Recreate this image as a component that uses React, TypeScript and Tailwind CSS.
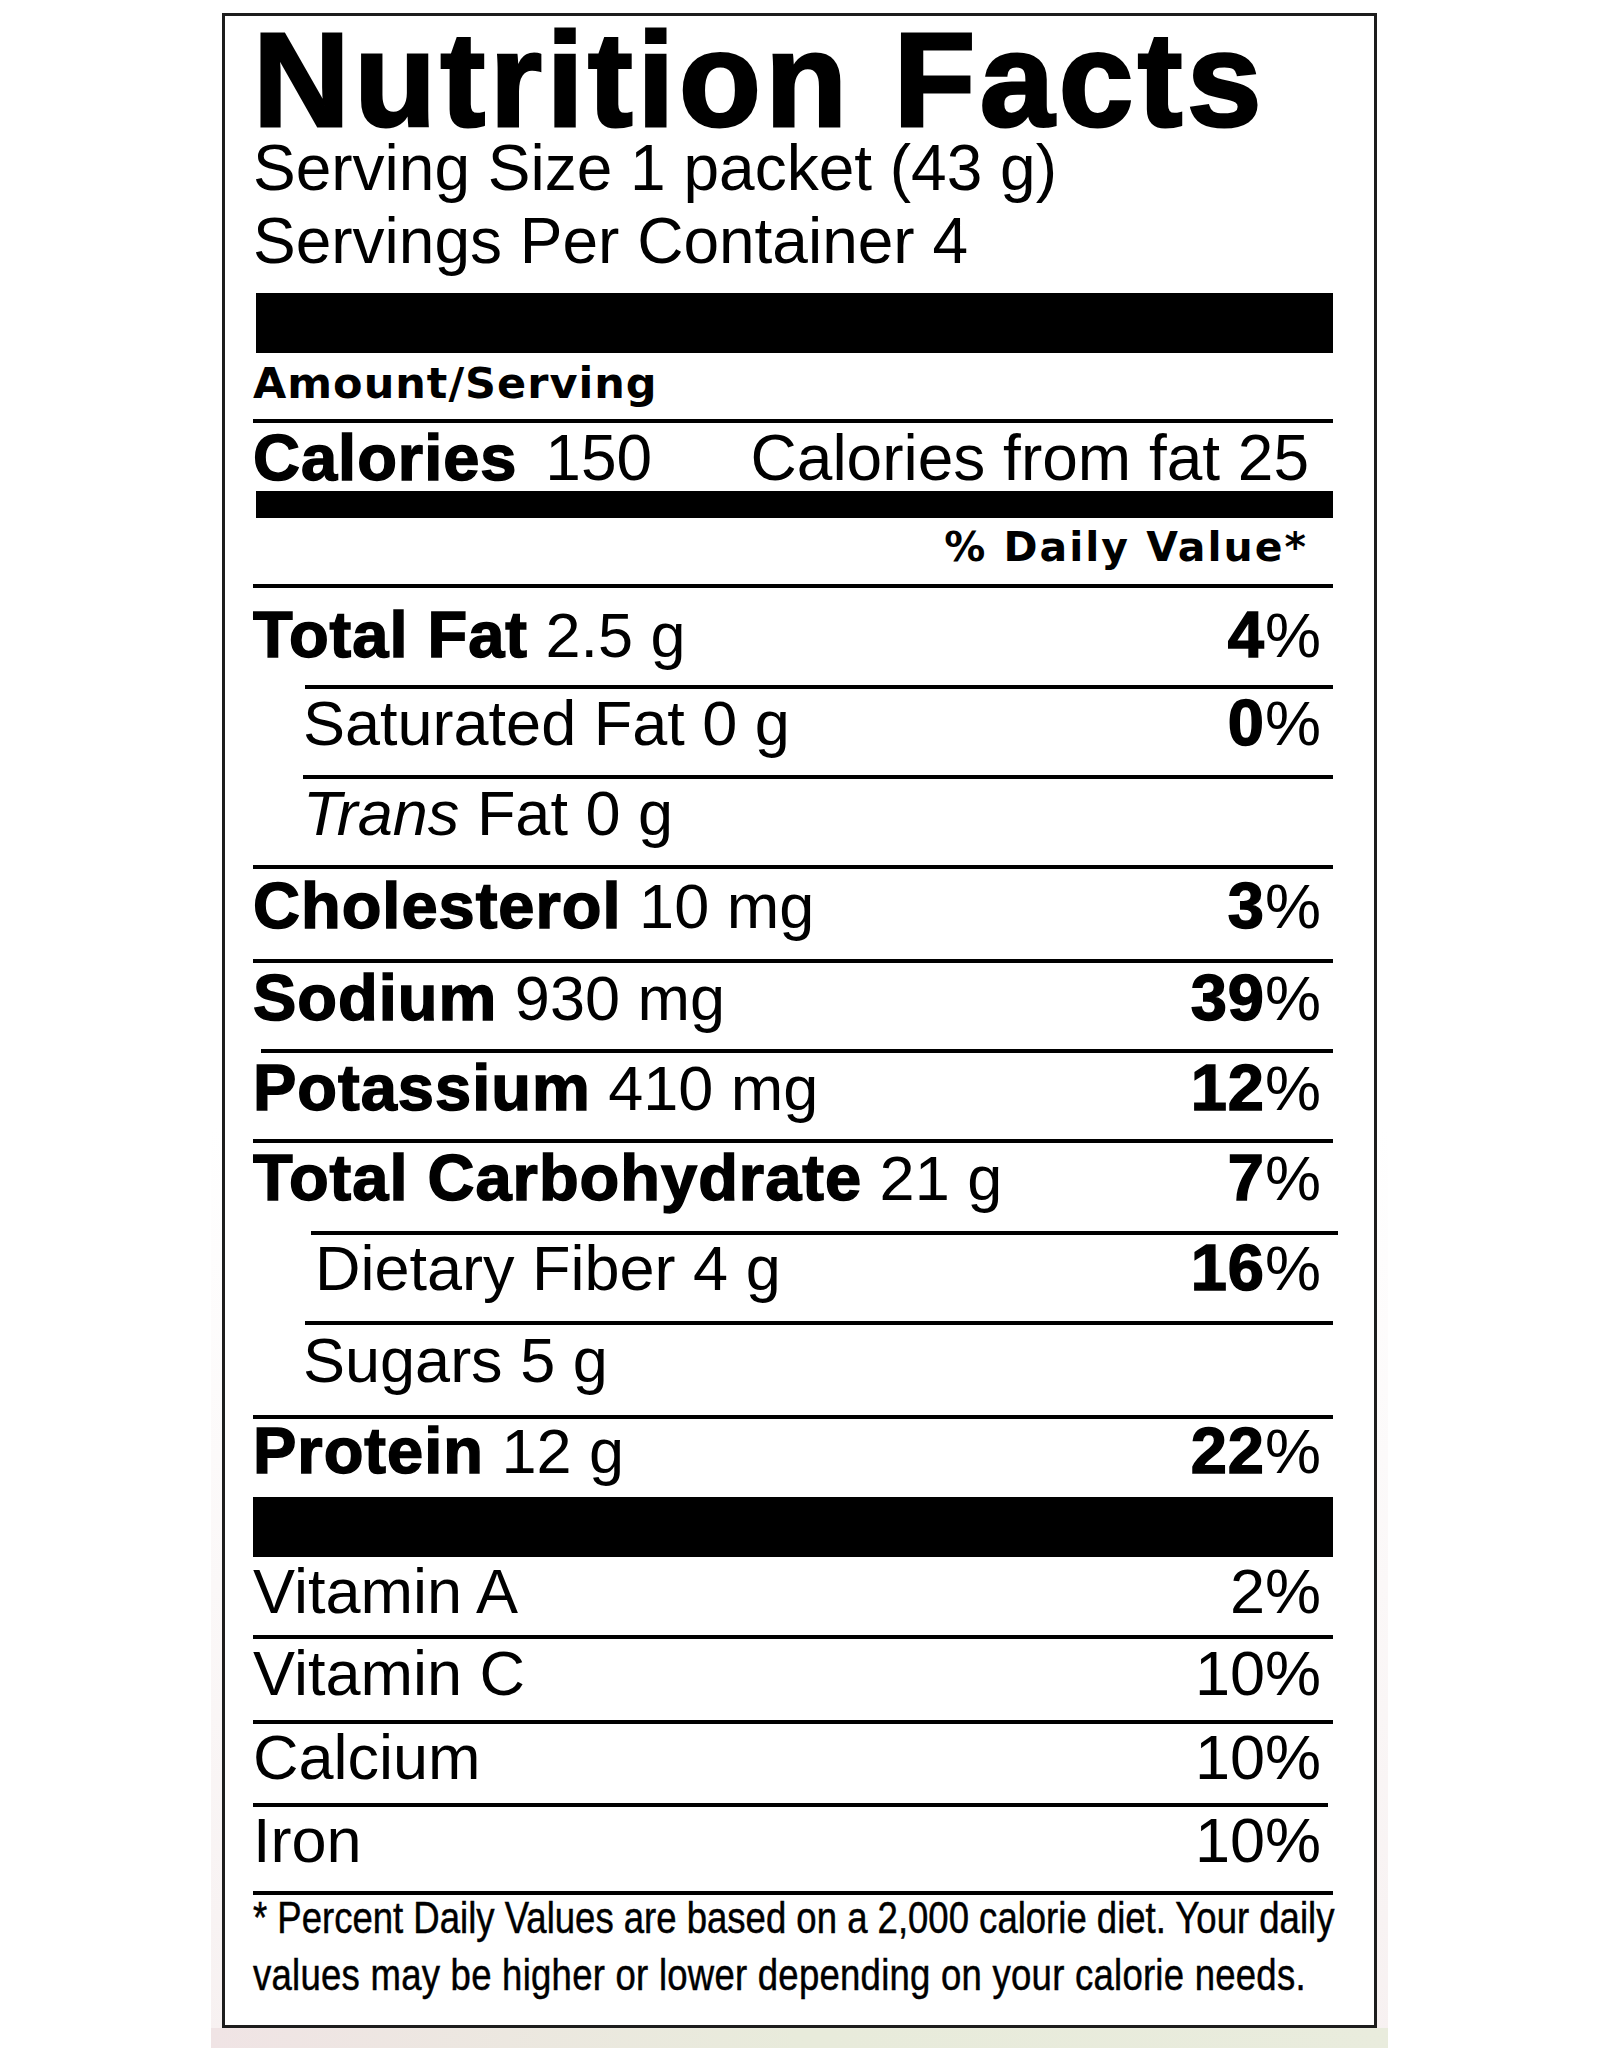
import React from 'react';

type Row = {
  label: string;
  amount: string;
  dv?: string;
  bold?: boolean;
  italic?: string;
  row: string;
  line: string;
};

const BOLD = 'font-bold text-[65px] tracking-[1px] [-webkit-text-stroke:1.5px_black]';

const nutrients: Row[] = [
  { label: 'Total Fat', amount: '2.5 g', dv: '4', bold: true, row: 'h-[97px] pt-[15px]', line: 'ml-[52px]' },
  { label: 'Saturated Fat', amount: '0 g', dv: '0', row: 'h-[86px] pt-[2px] pl-[50px]', line: 'ml-[50px]' },
  { label: 'Fat', italic: 'Trans', amount: '0 g', row: 'h-[86px] pt-[2px] pl-[50px]', line: '' },
  { label: 'Cholesterol', amount: '10 mg', dv: '3', bold: true, row: 'h-[90px] pt-[5px]', line: '' },
  { label: 'Sodium', amount: '930 mg', dv: '39', bold: true, row: 'h-[86px] pt-[3px]', line: 'ml-[8px]' },
  { label: 'Potassium', amount: '410 mg', dv: '12', bold: true, row: 'h-[86px] pt-[3px]', line: '' },
  { label: 'Total Carbohydrate', amount: '21 g', dv: '7', bold: true, row: 'h-[88px] pt-[3px]', line: 'ml-[58px] -mr-[5px]' },
  { label: 'Dietary Fiber', amount: '4 g', dv: '16', row: 'h-[86px] pt-[1px] pl-[62px]', line: 'ml-[52px]' },
  { label: 'Sugars', amount: '5 g', row: 'h-[90px] pt-[3px] pl-[50px]', line: '' },
];

const vitamins = [
  { label: 'Vitamin A', dv: '2%', row: 'h-[78px] pt-[2px]', line: '' },
  { label: 'Vitamin C', dv: '10%', row: 'h-[81px] pt-[2px]', line: '' },
  { label: 'Calcium', dv: '10%', row: 'h-[79px] pt-[1px]', line: 'mr-[5px]' },
  { label: 'Iron', dv: '10%', row: 'h-[84px] pt-[1px]', line: '' },
];

const Line = ({ className = '' }: { className?: string }) => (
  <div className={`h-[4px] bg-black ${className}`} />
);

const NutrientRow = ({ n }: { n: Row }) => (
  <div className={`flex justify-between pr-[12px] text-[63px] leading-[64px] ${n.row}`}>
    <div className="whitespace-nowrap">
      {n.italic && <span className="italic">{n.italic} </span>}
      <span className={n.bold ? BOLD : ''}>{n.label}</span> {n.amount}
    </div>
    {n.dv && (
      <div className="whitespace-nowrap">
        <span className={BOLD}>{n.dv}</span>%
      </div>
    )}
  </div>
);

export default function App() {
  return (
    <div className="w-[1600px] h-[2048px] bg-white text-black font-['Liberation_Sans',Arial,sans-serif]">
      <div className="ml-[211px] w-[1177px] h-[2048px] pt-[13px] bg-linear-to-b from-white from-55% to-[#f7f1f1]">
        <div className="ml-[11px] w-[1155px] h-[2015px] border-[3px] border-[#1d1d1d] bg-white pl-[28px] pt-[4px]">
          <div className="w-[1080px]">
            <div className="mt-[4px] h-[112px] text-[134px] leading-[112px] font-bold tracking-[4.5px] whitespace-nowrap [-webkit-text-stroke:3px_black]">
              Nutrition Facts
            </div>
            <div className="text-[64px] leading-[64px] whitespace-nowrap">Serving Size 1 packet (43 g)</div>
            <div className="text-[64px] leading-[82px] whitespace-nowrap">Servings Per Container 4</div>

            <div className="mt-[11px] ml-[3px] h-[60px] bg-black" />

            <div className="h-[66px] pt-[9px]">
              <span className="font-['DejaVu_Sans',sans-serif] font-bold text-[43px] leading-[43px] tracking-[1px]">
                Amount/Serving
              </span>
            </div>
            <Line />

            <div className="h-[68px] pt-[3px] pr-[24px] flex justify-between text-[64px] leading-[64px] whitespace-nowrap">
              <div>
                <span className={`${BOLD} mr-[10px]`}>Calories</span>&nbsp;150
              </div>
              <div>Calories from fat 25</div>
            </div>
            <div className="ml-[3px] h-[27px] bg-black" />

            <div className="h-[66px] pt-[9px] pr-[25px] text-right">
              <span className="font-['DejaVu_Sans',sans-serif] font-bold text-[41px] leading-[41px] tracking-[2px]">
                % Daily Value*
              </span>
            </div>
            <Line />

            {nutrients.map((n) => (
              <React.Fragment key={n.label + n.amount}>
                <NutrientRow n={n} />
                <Line className={n.line} />
              </React.Fragment>
            ))}

            <NutrientRow
              n={{ label: 'Protein', amount: '12 g', dv: '22', bold: true, row: 'h-[78px] pt-0', line: '' }}
            />
            <div className="h-[60px] bg-black" />

            {vitamins.map((v) => (
              <React.Fragment key={v.label}>
                <div className={`flex justify-between pr-[12px] text-[63px] leading-[64px] ${v.row}`}>
                  <div>{v.label}</div>
                  <div>{v.dv}</div>
                </div>
                <Line className={v.line} />
              </React.Fragment>
            ))}

            <div className="-mt-[6px] origin-left scale-x-[0.83] whitespace-nowrap text-[44px] leading-[57px] [-webkit-text-stroke:0.5px_black]">
              * Percent Daily Values are based on a 2,000 calorie diet. Your daily
              <br />
              <span className="tracking-[0.3px]">values may be higher or lower depending on your calorie needs.</span>
            </div>
          </div>
        </div>
        <div className="h-[20px] bg-linear-to-r from-[#f0e4e5] via-[#e8ebdb] to-[#e9ecdd]" />
      </div>
    </div>
  );
}
